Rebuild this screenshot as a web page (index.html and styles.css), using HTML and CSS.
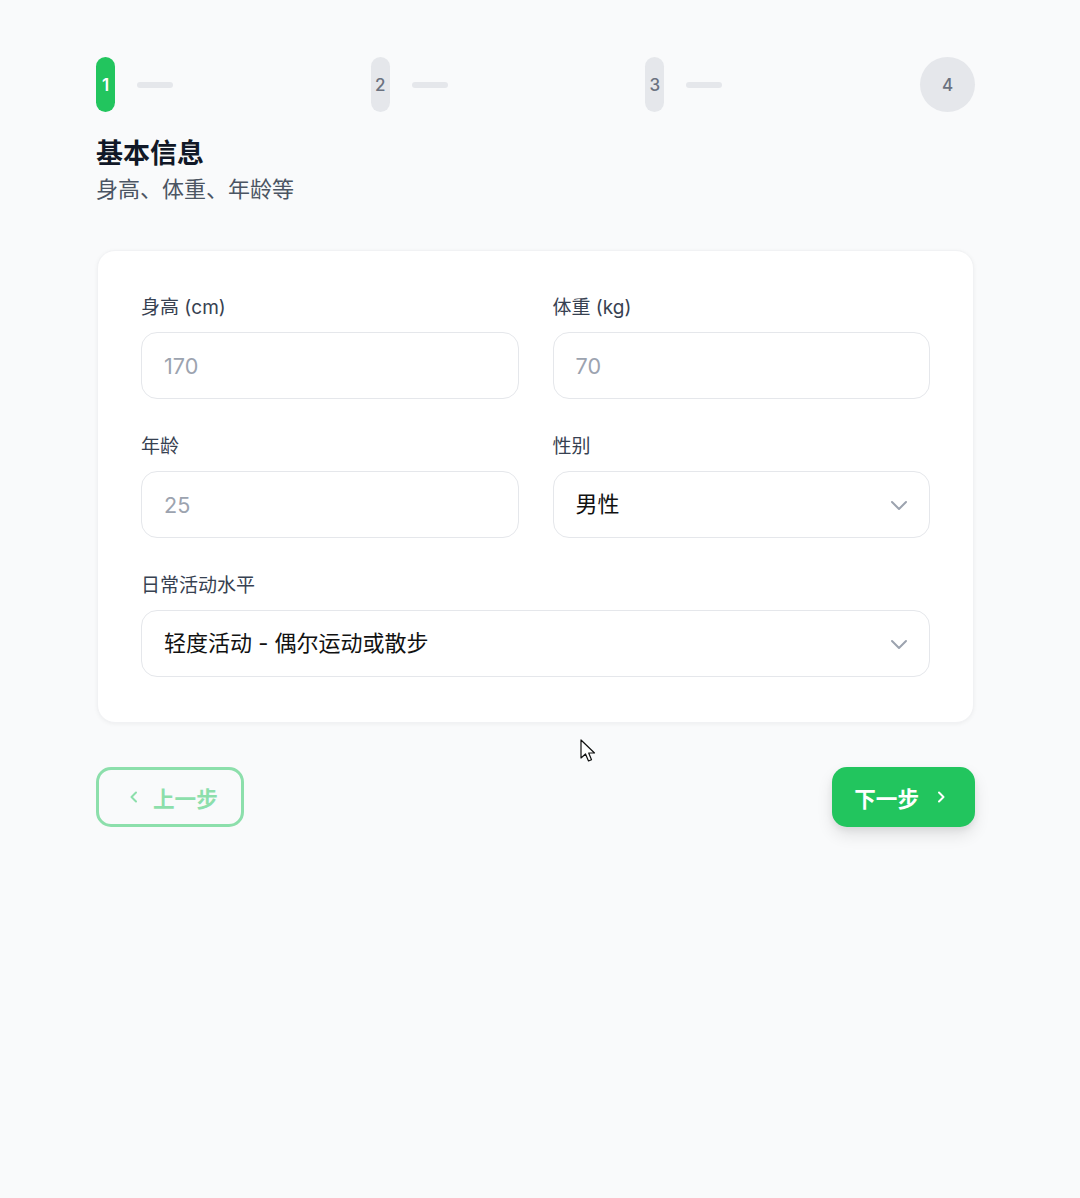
FILE: index.html
```html
<!DOCTYPE html>
<html lang="zh-CN">
<head>
<meta charset="utf-8">
<title>基本信息</title>
<link rel="stylesheet" href="styles.css">
</head>
<body>
<div class="page">
  <div class="steps">
    <div class="step"><span class="dot dot-active">1</span><span class="line"></span></div>
    <div class="step"><span class="dot">2</span><span class="line"></span></div>
    <div class="step"><span class="dot">3</span><span class="line"></span></div>
    <div class="step"><span class="dot dot-round">4</span></div>
  </div>

  <h1 class="title">基本信息</h1>
  <p class="subtitle">身高、体重、年龄等</p>

  <div class="card">
    <div class="grid">
      <div class="field">
        <label class="label">身高 (cm)</label>
        <div class="input"><span class="placeholder">170</span></div>
      </div>
      <div class="field">
        <label class="label">体重 (kg)</label>
        <div class="input"><span class="placeholder">70</span></div>
      </div>
      <div class="field">
        <label class="label">年龄</label>
        <div class="input"><span class="placeholder">25</span></div>
      </div>
      <div class="field">
        <label class="label">性别</label>
        <div class="input select"><span class="value">男性</span>
          <svg class="chev" width="24" height="24" viewBox="0 0 24 24"><path d="M5 9 L12 16 L19 9" fill="none" stroke="#9ca3af" stroke-width="2" stroke-linecap="round" stroke-linejoin="round"/></svg>
        </div>
      </div>
      <div class="field span2">
        <label class="label">日常活动水平</label>
        <div class="input select"><span class="value">轻度活动 - 偶尔运动或散步</span>
          <svg class="chev" width="24" height="24" viewBox="0 0 24 24"><path d="M5 9 L12 16 L19 9" fill="none" stroke="#9ca3af" stroke-width="2" stroke-linecap="round" stroke-linejoin="round"/></svg>
        </div>
      </div>
    </div>
  </div>

  <div class="actions">
    <button class="btn btn-prev">
      <svg width="20" height="20" viewBox="0 0 20 20"><path d="M12 5.5 L7.5 10 L12 14.5" fill="none" stroke="currentColor" stroke-width="2" stroke-linecap="round" stroke-linejoin="round"/></svg>
      <span>上一步</span>
    </button>
    <button class="btn btn-next">
      <span>下一步</span>
      <svg width="20" height="20" viewBox="0 0 20 20"><path d="M8 5.5 L12.5 10 L8 14.5" fill="none" stroke="currentColor" stroke-width="2" stroke-linecap="round" stroke-linejoin="round"/></svg>
    </button>
  </div>

  <svg class="cursor" width="18" height="26" viewBox="0 0 18 26"><path d="M1 1 L1 19 L5.5 15 L8.5 22 L11.5 20.7 L8.7 14 L14.5 14 Z" fill="#ffffff" stroke="#111111" stroke-width="1.2" stroke-linejoin="round"/></svg>
</div>
</body>
</html>
```

FILE: styles.css
```css
* { box-sizing: border-box; }

html, body {
  margin: 0;
  padding: 0;
  background: #f9fafb;
}

body {
  font-family: Inter, "Noto Sans CJK SC", "Noto Sans", sans-serif;
  color: #111827;
}

.page {
  position: relative;
  width: 879px;
  margin: 0 0 0 96px;
  padding-top: 57px;
  min-height: 1198px;
}

.steps {
  display: flex;
  justify-content: space-between;
  align-items: center;
  height: 55px;
}

.step {
  display: flex;
  align-items: center;
}

.dot {
  display: flex;
  align-items: center;
  justify-content: center;
  width: 19px;
  height: 55px;
  border-radius: 10px;
  background: #e5e7eb;
  color: #6b7280;
  font-size: 17px;
  font-weight: 500;
}

.dot-active {
  background: #22c55e;
  color: #ffffff;
  font-weight: 600;
}

.dot-round {
  width: 55px;
  border-radius: 50%;
}

.line {
  display: block;
  width: 36px;
  height: 6px;
  margin-left: 22px;
  border-radius: 3px;
  background: #e5e7eb;
}

.title {
  margin: 24px 0 2px;
  font-size: 27px;
  line-height: 36px;
  font-weight: 700;
  color: #111827;
}

.subtitle {
  margin: 0;
  font-size: 22px;
  line-height: 30px;
  color: #4b5563;
}

.card {
  margin: 46px 1px 0 1px;
  padding: 43px 43px 45px;
  background: #ffffff;
  border-radius: 18px;
  border: 1px solid #f1f2f4;
  box-shadow: 0 1px 4px rgba(0, 0, 0, 0.05);
}

.grid {
  display: grid;
  grid-template-columns: 1fr 1fr;
  column-gap: 34px;
  row-gap: 34px;
}

.span2 { grid-column: 1 / 3; }

.field {
  display: flex;
  flex-direction: column;
}

.label {
  font-size: 19px;
  line-height: 27px;
  color: #374151;
  margin-bottom: 11px;
}

.input {
  display: flex;
  align-items: center;
  height: 67px;
  padding: 0 22px;
  border: 1px solid #e5e7eb;
  border-radius: 16px;
  background: #ffffff;
  font-size: 21.6px;
}

.placeholder { color: #9ca3af; }

.value { color: #111111; flex: 1; font-size: 22px; line-height: 30px; margin-top: -2px; }

.select { justify-content: space-between; padding-right: 18px; }

.chev { flex: none; }

.actions {
  display: flex;
  justify-content: space-between;
  margin-top: 44px;
}

.btn {
  display: flex;
  align-items: center;
  height: 60px;
  border-radius: 15px;
  font-family: Inter, "Noto Sans CJK SC", sans-serif;
  font-size: 21.6px;
  font-weight: 700;
  cursor: pointer;
}

.btn-prev {
  gap: 9px;
  padding: 0 23px 0 25px;
  background: transparent;
  border: 3px solid #22c55e;
  color: #22c55e;
  opacity: 0.5;
}

.btn-next {
  gap: 12px;
  padding: 0 24px 0 22px;
  background: #22c55e;
  border: none;
  color: #ffffff;
  box-shadow: 0 8px 16px rgba(0, 0, 0, 0.10), 0 3px 6px rgba(0, 0, 0, 0.06);
}

.cursor {
  position: absolute;
  left: 484px;
  top: 739px;
}
```
